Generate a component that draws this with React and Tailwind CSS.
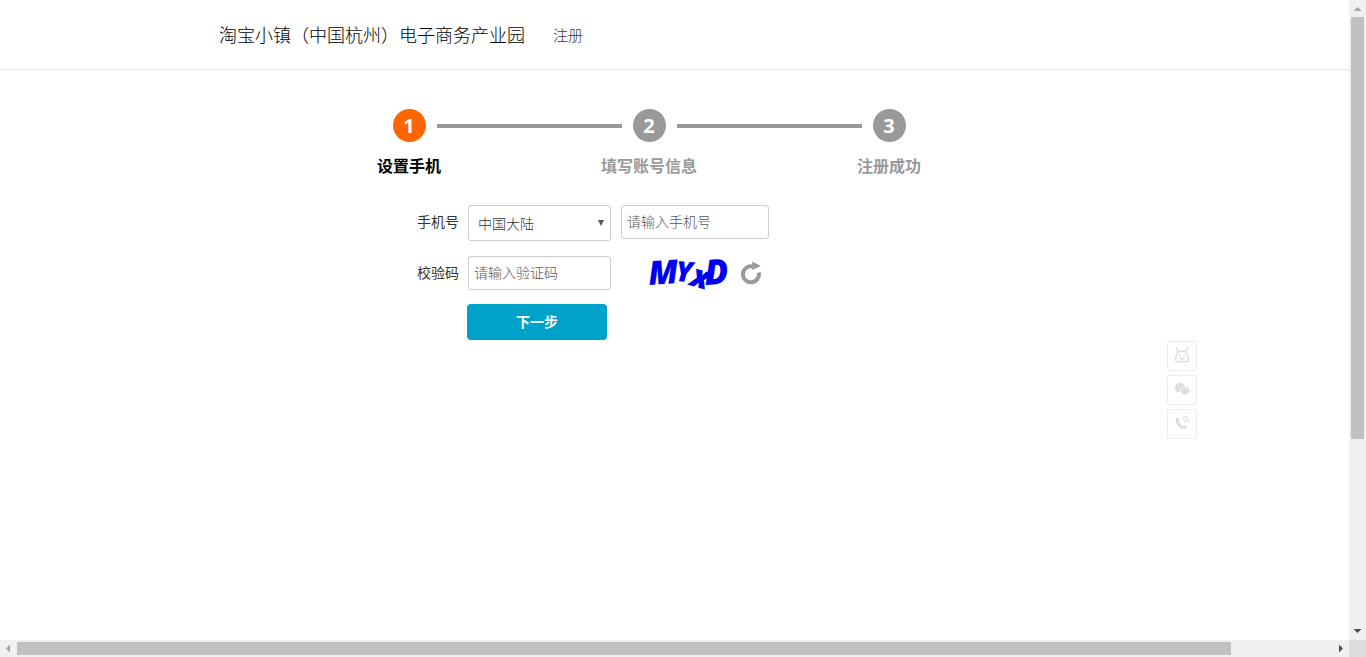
import { useState } from "react";

const steps = [
  { no: 1, label: "设置手机" },
  { no: 2, label: "填写账号信息" },
  { no: 3, label: "注册成功" },
];

// letters of the captcha, each one tilted a little differently
const captcha = [
  { char: "M", x: 3, y: 34, rotate: -4, size: 33 },
  { char: "Y", x: 29, y: 30, rotate: 4, size: 28 },
  { char: "x", x: 43, y: 34, rotate: 16, size: 32 },
  { char: "D", x: 59, y: 34, rotate: -3, size: 35 },
];

const Header = () => (
  <header className="border-b border-[#e4e4e4] pr-[51px]">
    <div className="mx-auto flex h-[69px] max-w-[860px] items-center gap-7">
      <h1 className="text-[18px] font-light leading-6 text-black">
        淘宝小镇（中国杭州）电子商务产业园
      </h1>
      <span className="text-[15px] font-light leading-6 text-[#333]">注册</span>
    </div>
  </header>
);

const Steps = ({ current }) => (
  <ol className="grid grid-cols-3 text-center">
    {steps.map(({ no, label }, index) => (
      <li key={no}>
        <div className="flex h-[33px] items-center">
          <div className="flex-1" />
          <div
            className={`flex size-[33px] items-center justify-center rounded-full font-['Open_Sans',sans-serif] text-[20px] font-bold leading-6 text-white ${
              no === current ? "bg-[#f60]" : "bg-[#999]"
            }`}
          >
            {no}
          </div>
          <div className="relative flex-1">
            {/* line to the next step */}
            {index < steps.length - 1 && (
              <div className="absolute -top-0.5 left-[11px] h-1 w-[185px] bg-[#999]" />
            )}
          </div>
        </div>
        <p
          className={`mt-3 text-[16px] font-bold leading-6 ${
            no === current ? "text-black" : "text-[#999]"
          }`}
        >
          {label}
        </p>
      </li>
    ))}
  </ol>
);

const Captcha = () => (
  <button type="button" aria-label="刷新校验码" className="-my-2 flex items-center gap-2 pl-[35px]">
    <svg width="87" height="50" viewBox="0 -3 87 50" className="overflow-visible">
      {captcha.map(({ char, x, y, rotate, size }) => (
        <text
          key={char}
          x={x}
          y={y}
          fontSize={size}
          transform={`rotate(${rotate} ${x} ${y})`}
          className="fill-[#0000f5] font-['Open_Sans',sans-serif] font-extrabold italic"
        >
          {char}
        </text>
      ))}
    </svg>
    <svg width="22" height="26" viewBox="0 0 22 26" fill="none">
      <path d="M17.7 12.4a8 8 0 1 1-6.2-5.9" stroke="#999" strokeWidth="4" />
      <path d="M11.2 1.4v8.7l8.6-4.2z" fill="#999" />
    </svg>
  </button>
);

const RegisterForm = () => {
  const [phone, setPhone] = useState("");
  const [code, setCode] = useState("");

  const field =
    "rounded-[3px] border border-[#ccc] bg-white text-[14px] font-light text-[#333] placeholder:text-[#555]";

  return (
    <form className="mt-[27px] pl-[120px] text-[14px]" onSubmit={(e) => e.preventDefault()}>
      <div className="flex items-start">
        <label htmlFor="phone" className="w-[50px] text-right leading-[34px] text-[#333]">
          手机号
        </label>
        <div className="relative ml-[9px]">
          <select
            aria-label="国家或地区"
            className={`${field} h-9 w-[143px] appearance-none pl-[9px]`}
          >
            <option>中国大陆</option>
            <option>中国香港</option>
            <option>中国台湾</option>
          </select>
          <svg
            className="pointer-events-none absolute right-[6px] top-[14px]"
            width="8"
            height="7"
            viewBox="0 0 8 7"
          >
            <path d="M1 1h6L4 7z" fill="#555" />
          </svg>
        </div>
        <input
          id="phone"
          type="tel"
          placeholder="请输入手机号"
          value={phone}
          onChange={(e) => setPhone(e.target.value)}
          className={`${field} ml-[10px] h-[34px] w-[148px] px-[5px] pb-0.5`}
        />
      </div>

      <div className="mt-[15px] flex items-center">
        <label htmlFor="code" className="w-[50px] text-right leading-[34px] text-[#333]">
          校验码
        </label>
        <input
          id="code"
          placeholder="请输入验证码"
          value={code}
          onChange={(e) => setCode(e.target.value)}
          className={`${field} ml-[9px] h-[34px] w-[143px] px-[5px] pb-0.5`}
        />
        <Captcha />
      </div>

      <button
        type="submit"
        className="ml-[58px] mt-[14px] block h-9 w-[140px] rounded-[4px] bg-[#00a2ca] pb-0.5 font-bold text-white"
      >
        下一步
      </button>
    </form>
  );
};

const contactLink =
  "flex size-[30px] items-center justify-center rounded-[2px] border border-[#ededed] bg-white text-[#dcdce0]";

// small floating buttons: assistant, wechat, phone
const ContactBar = () => (
  <aside className="absolute right-[152px] top-[341px] flex flex-col gap-1">
    <a href="#robot" aria-label="在线客服" className={contactLink}>
      <svg
        width="16"
        height="18"
        viewBox="0 0 16 18"
        fill="none"
        stroke="currentColor"
        strokeWidth="1.3"
        className="-mt-0.5"
      >
        <path d="M2 1.200l2.600 4.300M14 1.200l-2.600 4.300M4.600 5.500h6.800c1.600 1.500 2.800 5.500 3 8.500-.2 1-1 1.600-2 1.600H3.600c-1 0-1.800-.6-2-1.600.2-3 1.400-7 3-8.500z" />
        <path d="M5.600 8.500V10M10.400 8.500V10M5.200 11.700c1.500 1.700 4.100 1.700 5.600 0" />
      </svg>
    </a>
    <a href="#wechat" aria-label="微信" className={contactLink}>
      <svg width="16" height="14" viewBox="0 0 16 14" fill="currentColor" className="-mt-0.5">
        <path d="M6.200 1C3.100 1 .8 3 .8 5.500c0 1.400.8 2.600 2 3.400L2.300 10.500l2-1c.5.200 1.100.3 1.700.3C5.500 7 7.700 4.800 11 4.700 10.500 2.500 8.600 1 6.200 1z" />
        <path d="M15.400 8.800c0-2-1.900-3.500-4.200-3.500S6.900 6.800 6.900 8.800s1.900 3.500 4.300 3.500c.5 0 1-.1 1.400-.2l1.600.9-.4-1.500c1-.7 1.600-1.600 1.600-2.700z" />
        <path
          d="M4 3.600h1v1H4zM7.200 3.600h1v1h-1zM9.400 7.300h1v1h-1zM12 7.300h1v1h-1z"
          fill="#fff"
        />
      </svg>
    </a>
    <a href="#phone" aria-label="电话" className={contactLink}>
      <svg width="16" height="16" viewBox="0 0 16 16" fill="none" className="-mt-0.5">
        <path
          d="M3.200 2.200C1.700 3 1.200 4.500 1.800 6.600c1 3.700 4 6.600 7.300 7.400 1.900.4 3.300-.1 4.100-1.500l-2.900-2.300-1.600 1.200C6.800 10.500 5.300 8.700 4.600 6.600l1.500-1.200z"
          fill="currentColor"
        />
        <path
          d="M8.300 3.600c2.300.3 3.600 1.800 3.900 4M9 1.200c3.300.4 5.400 2.600 5.800 6"
          stroke="currentColor"
          strokeWidth="1.200"
        />
      </svg>
    </a>
  </aside>
);

const VerticalBar = () => (
  <div aria-hidden="true" className="flex w-[17px] flex-col items-center bg-[#f0f0f0]">
    <svg width="17" height="17" viewBox="0 0 17 17" className="shrink-0">
      <path d="M4.500 11h8l-4-4z" fill="#a3a3a3" />
    </svg>
    <div className="flex w-full flex-1 flex-col px-0.5">
      <div className="h-[69.6%] bg-[#c1c1c1]" />
    </div>
    <svg width="17" height="17" viewBox="0 0 17 17" className="shrink-0">
      <path d="M4.500 6h8l-4 4z" fill="#505050" />
    </svg>
  </div>
);

const HorizontalBar = () => (
  <div aria-hidden="true" className="flex h-[17px] shrink-0 bg-[#f0f0f0]">
    <svg width="17" height="17" viewBox="0 0 17 17" className="shrink-0">
      <path d="M10 4.500v8l-4-4z" fill="#a3a3a3" />
    </svg>
    <div className="flex flex-1 py-0.5">
      <div className="w-[92.3%] bg-[#c1c1c1]" />
    </div>
    <svg width="17" height="17" viewBox="0 0 17 17" className="shrink-0">
      <path d="M7 4.500v8l4-4z" fill="#505050" />
    </svg>
    <div className="w-[17px] bg-[#dcdcdc]" />
  </div>
);

const App = () => (
  <div className="flex h-screen flex-col bg-white font-['Open_Sans','Noto_Sans_CJK_SC',sans-serif]">
    <div className="flex min-h-0 flex-1">
      <div className="relative flex-1 overflow-hidden">
        <Header />
        <main className="pr-[51px] pt-[39px]">
          <div className="mx-auto max-w-[720px]">
            <Steps current={1} />
            <RegisterForm />
          </div>
        </main>
        <ContactBar />
      </div>
      <VerticalBar />
    </div>
    <HorizontalBar />
  </div>
);

export default App;
